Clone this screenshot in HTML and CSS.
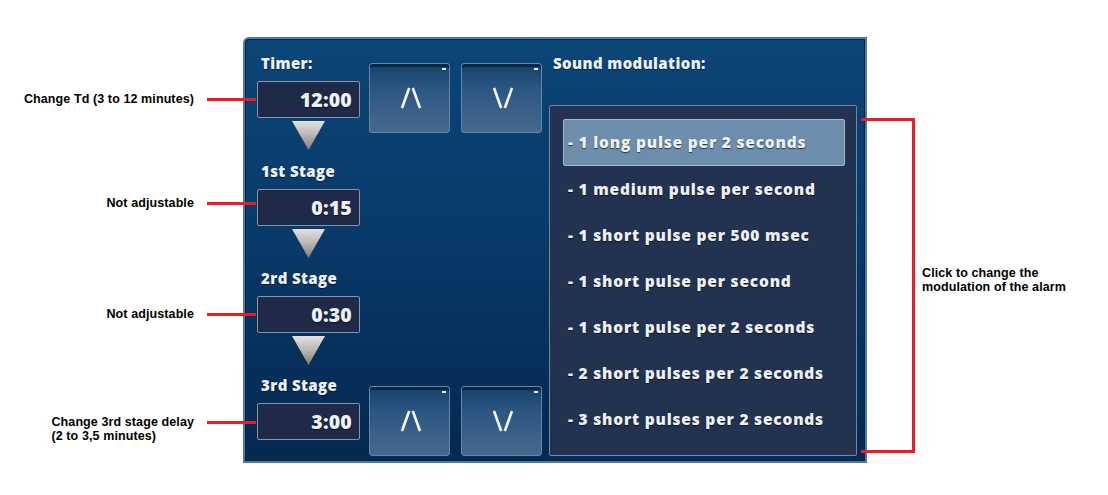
FILE: index.html
```html
<!DOCTYPE html>
<html>
<head>
<meta charset="utf-8">
<link rel="stylesheet" href="styles.css">
</head>
<body>
<div class="page">
  <div class="notes-left">
    <div class="note note-1"><span class="note-text">Change Td (3 to 12 minutes)</span><i class="lead"></i></div>
    <div class="note note-2"><span class="note-text">Not adjustable</span><i class="lead"></i></div>
    <div class="note note-3"><span class="note-text">Not adjustable</span><i class="lead"></i></div>
    <div class="note note-4"><span class="note-text left">Change 3rd stage delay<br>(2 to 3,5 minutes)</span><i class="lead"></i></div>
  </div>

  <div class="panel">
    <div class="col-stages">
      <div class="stage first">
        <div class="stage-label">Timer:</div>
        <div class="value-box">12:00</div>
        <div class="tri"></div>
      </div>
      <div class="stage second">
        <div class="stage-label">1st Stage</div>
        <div class="value-box">0:15</div>
        <div class="tri"></div>
      </div>
      <div class="stage">
        <div class="stage-label">2rd Stage</div>
        <div class="value-box">0:30</div>
        <div class="tri"></div>
      </div>
      <div class="stage">
        <div class="stage-label">3rd Stage</div>
        <div class="value-box">3:00</div>
      </div>
    </div>

    <div class="col-buttons">
      <div class="btn-pair">
        <div class="btn"><svg class="glyph" width="24" height="22" viewBox="0 0 24 22"><path d="M3 21 L10.2 1 M13.8 1 L21 21"/></svg></div>
        <div class="btn"><svg class="glyph" width="24" height="22" viewBox="0 0 24 22"><path d="M3 1 L10.2 21 M13.8 21 L21 1"/></svg></div>
      </div>
      <div class="btn-pair">
        <div class="btn"><svg class="glyph" width="24" height="22" viewBox="0 0 24 22"><path d="M3 21 L10.2 1 M13.8 1 L21 21"/></svg></div>
        <div class="btn"><svg class="glyph" width="24" height="22" viewBox="0 0 24 22"><path d="M3 1 L10.2 21 M13.8 21 L21 1"/></svg></div>
      </div>
    </div>

    <div class="col-sound">
      <div class="sound-label">Sound modulation:</div>
      <ul class="list">
        <li class="item selected">- 1 long pulse per 2 seconds</li>
        <li class="item">- 1 medium pulse per second</li>
        <li class="item">- 1 short pulse per 500 msec</li>
        <li class="item">- 1 short pulse per second</li>
        <li class="item">- 1 short pulse per 2 seconds</li>
        <li class="item">- 2 short pulses per 2 seconds</li>
        <li class="item">- 3 short pulses per 2 seconds</li>
      </ul>
    </div>
  </div>

  <div class="notes-right">
    <div class="bracket"></div>
    <div class="note-right">Click to change the<br>modulation of the alarm</div>
  </div>
</div>
</body>
</html>
```

FILE: styles.css
```css
html, body {
  margin: 0;
  padding: 0;
  background: #ffffff;
}

.page {
  display: flex;
  align-items: flex-start;
  width: 1108px;
  height: 495px;
  overflow: hidden;
}

/* ---------- left annotations ---------- */
.notes-left {
  width: 243px;
  flex: none;
  display: flex;
  flex-direction: column;
  padding-top: 92px;
}

.note {
  display: flex;
  justify-content: flex-end;
  align-items: flex-start;
  font-family: "Liberation Sans", Arial, sans-serif;
  font-weight: bold;
  font-size: 12.5px;
  letter-spacing: 0.1px;
  line-height: 14px;
  color: #000;
}

.note-2 { margin-top: 90px; }
.note-3 { margin-top: 97px; }
.note-4 { margin-top: 94px; }

.note-text {
  text-align: right;
  white-space: nowrap;
}
.note-text.left { text-align: left; }

.lead {
  display: block;
  flex: none;
  width: 49px;
  height: 3px;
  margin-top: 6px;
  margin-left: 13px;
  margin-right: -13px;
  background: #ec1c24;
  position: relative;
  z-index: 2;
}

/* ---------- panel ---------- */
.panel {
  flex: none;
  box-sizing: border-box;
  width: 624px;
  height: 426px;
  margin-top: 37px;
  display: flex;
  padding: 15px 8px 5px 12px;
  border: 2px solid #4d7aa6;
  border-top-left-radius: 6px;
  background: linear-gradient(#0c4577 0%, #083a69 45%, #05305c 75%, #04294f 100%);
  box-shadow: inset 1px 1px 0 #022444, inset -1px -1px 0 #022444;
  font-family: "Open Sans", "DejaVu Sans", sans-serif;
  font-weight: 800;
  color: #eef2f6;
}

.col-stages {
  width: 103px;
  flex: none;
  display: flex;
  flex-direction: column;
}

.stage { display: flex; flex-direction: column; align-items: stretch; margin-top: 11px; }
.stage.first { margin-top: 0; }
.stage.second { margin-top: 12px; }

.stage-label {
  height: 18px;
  line-height: 18px;
  padding-left: 4px;
  font-size: 15px;
  letter-spacing: 0.4px;
  text-shadow: 0 1px 1px rgba(0,0,0,0.5);
}

.value-box {
  box-sizing: border-box;
  height: 37px;
  margin-top: 9px;
  padding-right: 7px;
  border: 1px solid #8496ae;
  border-radius: 2px;
  background: #1e2a48;
  text-align: right;
  font-size: 19.5px;
  line-height: 35px;
  letter-spacing: 0.2px;
  text-shadow: 0 1px 1px rgba(0,0,0,0.6);
}

.tri {
  width: 33px;
  height: 29px;
  margin: 3px auto 0;
  background: linear-gradient(#e2e2e2 0%, #bdbab7 45%, #8a7c70 100%);
  clip-path: polygon(0 0, 100% 0, 50% 100%);
}

/* ---------- buttons ---------- */
.col-buttons {
  width: 173px;
  flex: none;
  margin-left: 9px;
  padding-top: 9px;
  display: flex;
  flex-direction: column;
  justify-content: space-between;
}

.btn-pair {
  display: flex;
  gap: 11px;
}

.btn {
  position: relative;
  box-sizing: border-box;
  width: 81px;
  height: 70px;
  padding-left: 2px;
  border: 1px solid #6388ac;
  border-radius: 3px;
  background: linear-gradient(#15406a 0%, #2b5681 35%, #46698c 100%);
  box-shadow: inset 0 3px 0 #0c2540;
  display: flex;
  align-items: center;
  justify-content: center;
}

.btn::after {
  content: "";
  position: absolute;
  top: 4px;
  right: 3px;
  width: 4px;
  height: 2px;
  background: #e6eef5;
}

.glyph path {
  fill: none;
  stroke: #f4f6f8;
  stroke-width: 2.6;
  stroke-linecap: butt;
}

/* ---------- sound list ---------- */
.col-sound {
  width: 308px;
  flex: none;
  margin-left: 7px;
  display: flex;
  flex-direction: column;
}

.sound-label {
  height: 18px;
  line-height: 18px;
  padding-left: 4px;
  font-size: 15px;
  letter-spacing: 0.4px;
  text-shadow: 0 1px 1px rgba(0,0,0,0.5);
}

.list {
  box-sizing: border-box;
  height: 353px;
  margin: 33px 0 0;
  padding: 13px 11px 0 13px;
  list-style: none;
  border: 1px solid #7188a4;
  border-radius: 2px;
  background: #233250;
}

.item {
  box-sizing: border-box;
  height: 46px;
  line-height: 46px;
  padding-left: 5px;
  font-size: 15.5px;
  letter-spacing: 0.8px;
  white-space: nowrap;
  text-shadow: 0 1px 1px rgba(0,0,0,0.6);
}

.item.selected {
  height: 47px;
  line-height: 45px;
  border: 1px solid #a3b8cc;
  border-radius: 2px;
  background: #6c8dab;
  padding-left: 4px;
}

/* ---------- right annotation ---------- */
.notes-right {
  display: flex;
  align-items: flex-start;
}

.bracket {
  flex: none;
  box-sizing: border-box;
  width: 54px;
  height: 335px;
  margin-top: 118px;
  margin-left: -6px;
  border: 3px solid #ec1c24;
  border-left: none;
  position: relative;
  z-index: 2;
}

.note-right {
  margin-top: 266px;
  margin-left: 7px;
  font-family: "Liberation Sans", Arial, sans-serif;
  font-weight: bold;
  font-size: 12.5px;
  letter-spacing: 0.1px;
  line-height: 14px;
  color: #000;
  white-space: nowrap;
}
```
